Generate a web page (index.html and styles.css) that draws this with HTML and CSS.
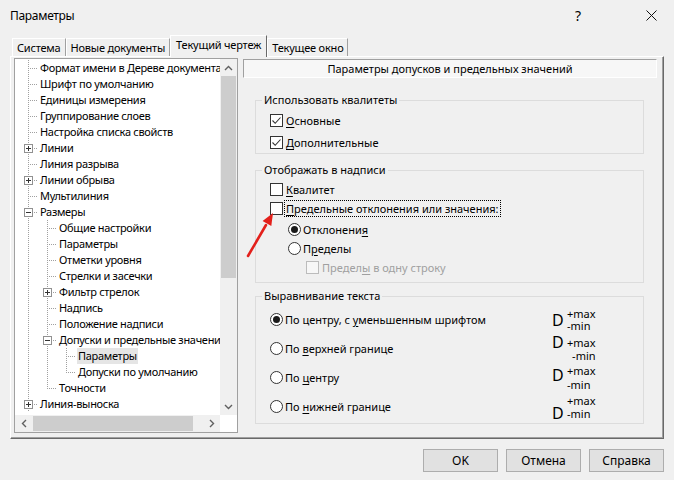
FILE: index.html
```html
<!DOCTYPE html>
<html lang="ru">
<head>
  <meta charset="UTF-8" />
  <title>Параметры</title>
  <link rel="stylesheet" href="styles.css">
</head>
<body>
  <div class="titlebar">
    <span class="title">Параметры</span>
    <span class="help">?</span>
    <span class="close">
      <svg width="11" height="11" viewBox="0 0 11 11"><path d="M0.5 0.5 L10.5 10.5 M10.5 0.5 L0.5 10.5" stroke="#111" stroke-width="1" fill="none"/></svg>
    </span>
  </div>

  <div class="content">
    <div class="tabs">
      <div class="tab">Система</div>
      <div class="tab">Новые документы</div>
      <div class="tab active">Текущий чертеж</div>
      <div class="tab last">Текущее окно</div>
    </div>

    <div class="frame">
      <div class="tree-box">
        <div class="tree-main">
          <div class="tree">
            <div class="row"><span class="g t"></span><span class="lbl">Формат имени в Дереве документа</span></div>
            <div class="row"><span class="g t"></span><span class="lbl">Шрифт по умолчанию</span></div>
            <div class="row"><span class="g t"></span><span class="lbl">Единицы измерения</span></div>
            <div class="row"><span class="g t"></span><span class="lbl">Группирование слоев</span></div>
            <div class="row"><span class="g t"></span><span class="lbl">Настройка списка свойств</span></div>
            <div class="row"><span class="g t"><i class="box plus"></i></span><span class="lbl">Линии</span></div>
            <div class="row"><span class="g t"></span><span class="lbl">Линия разрыва</span></div>
            <div class="row"><span class="g t"><i class="box plus"></i></span><span class="lbl">Линии обрыва</span></div>
            <div class="row"><span class="g t"></span><span class="lbl">Мультилиния</span></div>
            <div class="row"><span class="g t"><i class="box minus"></i></span><span class="lbl">Размеры</span></div>
            <div class="row"><span class="g v"></span><span class="g t"></span><span class="lbl">Общие настройки</span></div>
            <div class="row"><span class="g v"></span><span class="g t"></span><span class="lbl">Параметры</span></div>
            <div class="row"><span class="g v"></span><span class="g t"></span><span class="lbl">Отметки уровня</span></div>
            <div class="row"><span class="g v"></span><span class="g t"></span><span class="lbl">Стрелки и засечки</span></div>
            <div class="row"><span class="g v"></span><span class="g t"><i class="box plus"></i></span><span class="lbl">Фильтр стрелок</span></div>
            <div class="row"><span class="g v"></span><span class="g t"></span><span class="lbl">Надпись</span></div>
            <div class="row"><span class="g v"></span><span class="g t"></span><span class="lbl">Положение надписи</span></div>
            <div class="row"><span class="g v"></span><span class="g t"><i class="box minus"></i></span><span class="lbl">Допуски и предельные значения</span></div>
            <div class="row"><span class="g v"></span><span class="g v"></span><span class="g t"></span><span class="lbl selected">Параметры</span></div>
            <div class="row"><span class="g v"></span><span class="g v"></span><span class="g l"></span><span class="lbl">Допуски по умолчанию</span></div>
            <div class="row"><span class="g v"></span><span class="g l"></span><span class="lbl">Точности</span></div>
            <div class="row"><span class="g t"><i class="box plus"></i></span><span class="lbl">Линия-выноска</span></div>
          </div>
          <div class="vscroll">
            <div class="arrow">
              <svg width="9" height="6" viewBox="0 0 9 6"><path d="M1 5 L4.5 1.5 L8 5" stroke="#606060" stroke-width="1.4" fill="none"/></svg>
            </div>
            <div class="vthumb"></div>
            <div class="spacer"></div>
            <div class="arrow">
              <svg width="9" height="6" viewBox="0 0 9 6"><path d="M1 1 L4.5 4.5 L8 1" stroke="#606060" stroke-width="1.4" fill="none"/></svg>
            </div>
          </div>
        </div>
        <div class="hbar">
          <div class="hscroll">
            <div class="arrow">
              <svg width="6" height="9" viewBox="0 0 6 9"><path d="M5 1 L1.5 4.5 L5 8" stroke="#606060" stroke-width="1.4" fill="none"/></svg>
            </div>
            <div class="hthumb"></div>
            <div class="spacer"></div>
            <div class="arrow">
              <svg width="6" height="9" viewBox="0 0 6 9"><path d="M1 1 L4.5 4.5 L1 8" stroke="#606060" stroke-width="1.4" fill="none"/></svg>
            </div>
          </div>
          <div class="corner"></div>
        </div>
      </div>

      <div class="page">
        <div class="page-head">Параметры допусков и предельных значений</div>

        <div class="group g1">
          <span class="legend">Использовать квалитеты</span>
          <div class="opt first">
            <span class="cb checked"><svg width="11" height="11" viewBox="0 0 11 11"><path d="M1.5 5.5 L4.2 8.3 L9.5 2.5" stroke="#333" stroke-width="1.1" fill="none"/></svg></span>
            <span class="txt"><u>О</u>сновные</span>
          </div>
          <div class="opt">
            <span class="cb checked"><svg width="11" height="11" viewBox="0 0 11 11"><path d="M1.5 5.5 L4.2 8.3 L9.5 2.5" stroke="#333" stroke-width="1.1" fill="none"/></svg></span>
            <span class="txt"><u>Д</u>ополнительные</span>
          </div>
        </div>

        <div class="group g2">
          <span class="legend">Отображать в надписи</span>
          <div class="opt first">
            <span class="cb"></span>
            <span class="txt"><u>К</u>валитет</span>
          </div>
          <div class="opt">
            <span class="cb"></span>
            <span class="txt focus"><u>П</u>редельные отклонения или значения:</span>
          </div>
          <div class="opt sub gap">
            <span class="rb on"></span>
            <span class="txt rtxt">Отклонени<u>я</u></span>
          </div>
          <div class="opt sub">
            <span class="rb"></span>
            <span class="txt rtxt">П<u>р</u>еделы</span>
          </div>
          <div class="opt sub2">
            <span class="cb off"></span>
            <span class="txt dim">Предел<u>ы</u> в одну строку</span>
          </div>
        </div>

        <div class="group g3">
          <span class="legend">Выравнивание текста</span>
          <div class="align first">
            <div class="choice"><span class="rb on"></span><span class="txt rtxt">По центру, с <u>у</u>меньшенным шрифтом</span></div>
            <div class="fx fx1"><span class="d">D</span><span class="hi">+max</span><span class="lo">-min</span></div>
          </div>
          <div class="align">
            <div class="choice"><span class="rb"></span><span class="txt rtxt">По <u>в</u>ерхней границе</span></div>
            <div class="fx fx2"><span class="d">D</span><span class="hi">+max</span><span class="lo">-min</span></div>
          </div>
          <div class="align">
            <div class="choice"><span class="rb"></span><span class="txt rtxt">По <u>ц</u>ентру</span></div>
            <div class="fx fx3"><span class="d">D</span><span class="hi">+max</span><span class="lo">-min</span></div>
          </div>
          <div class="align">
            <div class="choice"><span class="rb"></span><span class="txt rtxt">По <u>н</u>ижней границе</span></div>
            <div class="fx fx4"><span class="d">D</span><span class="hi">+max</span><span class="lo">-min</span></div>
          </div>
        </div>
      </div>
    </div>

    <div class="buttons">
      <button class="btn">OK</button>
      <button class="btn">Отмена</button>
      <button class="btn">Справка</button>
    </div>
  </div>

  <!-- красная стрелка-пометка поверх окна -->
  <svg class="mark" width="40" height="56" viewBox="240 208 40 56">
    <path d="M248 256 L266 225" stroke="#e3201b" stroke-width="2.6" stroke-linecap="round" fill="none"/>
    <path d="M273 213 L271.3 226 L262.6 221 Z" fill="#e3201b"/>
  </svg>
</body>
</html>
```

FILE: styles.css
```css
:root {
  --vl: repeating-linear-gradient(to bottom, #a0a0a0 0 1px, transparent 1px 2px);
  --hl: repeating-linear-gradient(to right, #a0a0a0 0 1px, transparent 1px 2px);
}

* {
  box-sizing: border-box;
}

body {
  margin: 0;
  width: 674px;
  height: 480px;
  background: #f0f0f0;
  font-family: "Noto Sans", sans-serif;
  font-size: 11px;
  color: #000;
  overflow: hidden;
  position: relative;
}

u {
  text-decoration: underline;
  text-underline-offset: 2px;
}

/* Заголовок */
.titlebar {
  height: 30px;
  display: flex;
  align-items: center;
  padding-left: 10px;
}

.title {
  flex: 1;
  font-size: 12px;
  letter-spacing: -0.3px;
}

.help {
  width: 46px;
  text-align: center;
  font-size: 14px;
  margin-right: 27px;
}

.close {
  width: 46px;
  height: 30px;
  display: flex;
  align-items: center;
  justify-content: center;
}

.content {
  padding: 0 10px;
}

/* Вкладки */
.tabs {
  height: 26px;
  display: flex;
  align-items: flex-end;
  padding-left: 2px;
}

.tab {
  height: 18px;
  line-height: 17px;
  padding: 0 4px;
  letter-spacing: -0.2px;
  border-left: 1px solid #fff;
  border-top: 1px solid #fff;
  border-right: 1px solid #a0a0a0;
  white-space: nowrap;
}

.tab.active {
  height: 22px;
  line-height: 18px;
  margin-bottom: -1px;
  padding: 0 5px;
  background: #f0f0f0;
  border-right-color: #696969;
  position: relative;
  z-index: 1;
}

/* Рамка страницы */
.frame {
  height: 383px;
  display: flex;
  gap: 5px;
  padding: 1px 6px 5px 3px;
  border: 1px solid;
  border-color: #fff #696969 #696969 #fff;
  box-shadow: inset -1px -1px 0 #a0a0a0;
}

/* Дерево */
.tree-box {
  width: 224px;
  height: 375px;
  flex: none;
  border: 1px solid #a0a0a0;
  background: #fff;
  display: flex;
  flex-direction: column;
}

.tree-main {
  height: 356px;
  display: flex;
}

.tree {
  flex: 1;
  overflow: hidden;
  padding: 1px 0 0 4px;
}

.row {
  display: flex;
  height: 16px;
  align-items: center;
  white-space: nowrap;
}

.g {
  width: 19px;
  height: 16px;
  flex: none;
  display: flex;
  align-items: center;
  padding-left: 5px;
  background-repeat: no-repeat;
}

.g.v {
  background-image: var(--vl);
  background-size: 1px 16px;
  background-position: 9px 0;
}

.g.t,
.g.l {
  background-image: var(--vl), var(--hl);
  background-size: 1px 16px, 10px 1px;
  background-position: 9px 0, 9px 8px;
}

.g.l {
  background-size: 1px 9px, 10px 1px;
}

.box {
  width: 9px;
  height: 9px;
  border: 1px solid #919191;
  background-color: #fff;
  background-repeat: no-repeat;
  background-position: center;
}

.box.plus {
  background-image: linear-gradient(#333, #333), linear-gradient(#333, #333);
  background-size: 5px 1px, 1px 5px;
}

.box.minus {
  background-image: linear-gradient(#333, #333);
  background-size: 5px 1px;
}

.lbl {
  margin-left: 1px;
  padding: 0 1px;
  line-height: 16px;
  letter-spacing: -0.3px;
}

.lbl.selected {
  background: #e5e5e5;
}

.vscroll {
  width: 17px;
  flex: none;
  background: #f0f0f0;
  display: flex;
  flex-direction: column;
}

.arrow {
  width: 17px;
  height: 17px;
  flex: none;
  display: flex;
  align-items: center;
  justify-content: center;
}

.vthumb {
  height: 202px;
  margin: 0 1px;
  background: #cdcdcd;
}

.spacer {
  flex: 1;
}

.hbar {
  height: 17px;
  display: flex;
}

.hscroll {
  flex: 1;
  display: flex;
  background: #f0f0f0;
}

.hthumb {
  width: 160px;
  margin: 1px 0 1px 1px;
  background: #cdcdcd;
}

.corner {
  width: 17px;
  background: #fff;
}

/* Правая страница */
.page {
  flex: 1;
  padding-top: 1px;
  display: flex;
  flex-direction: column;
}

.page-head {
  height: 19px;
  line-height: 17px;
  text-align: center;
  background: #f7f7f7;
  border: 1px solid;
  border-color: #a0a0a0 #fff #fff #a0a0a0;
}

.group {
  margin: 0 13px 0 12px;
  border: 1px solid #dcdcdc;
  display: flex;
  flex-direction: column;
}

.g1 {
  margin-top: 22px;
  height: 54px;
}

.g2 {
  margin-top: 16px;
  height: 113px;
}

.g3 {
  margin-top: 13px;
  height: 128px;
}

.legend {
  align-self: flex-start;
  margin: -9px 0 0 6px;
  padding: 0 2px;
  line-height: 16px;
  background: #f0f0f0;
}

.opt {
  display: flex;
  align-items: center;
  height: 19px;
  padding-left: 14px;
}

.g1 .opt {
  height: 20px;
  margin-top: 2px;
}

.g2 .opt.first {
  margin-top: 2px;
}

.opt.gap {
  margin-top: 2px;
}

.opt.sub {
  padding-left: 32px;
}

.opt.sub2 {
  padding-left: 50px;
}

.cb {
  width: 13px;
  height: 13px;
  flex: none;
  border: 1px solid #333;
  background: #fff;
  display: flex;
  align-items: center;
  justify-content: center;
}

.cb.off {
  border-color: #bcbcbc;
  background: #f7f7f7;
}

.rb {
  width: 13px;
  height: 13px;
  flex: none;
  border: 1px solid #333;
  border-radius: 50%;
  background: #fff;
  display: flex;
  align-items: center;
  justify-content: center;
}

.rb.on::after {
  content: "";
  width: 7px;
  height: 7px;
  border-radius: 50%;
  background: #1a1a1a;
}

.txt {
  margin-left: 3px;
  line-height: 15px;
  white-space: nowrap;
}

.rtxt {
  margin-left: 2px;
}

.focus {
  margin-left: 2px;
  padding: 0 1px;
  outline: 1px dotted #000;
  outline-offset: 0;
}

.dim {
  color: #a0a0a0;
}

/* Выравнивание текста */
.align {
  height: 29px;
  display: grid;
  grid-template-columns: 282px 1fr;
  align-items: center;
  padding-left: 14px;
}

.align.first {
  margin-top: 1px;
}

.choice {
  display: flex;
  align-items: center;
}

.fx {
  display: grid;
  grid-template-columns: 15px auto;
  align-items: center;
  justify-content: start;
  font-size: 11px;
}

.fx .d {
  font-size: 16px;
  line-height: 16px;
}

.fx .hi,
.fx .lo {
  grid-column: 2;
  line-height: inherit;
}

.fx1 {
  grid-template-rows: 12px 12px;
  line-height: 12px;
}

.fx1 .d {
  grid-row: 1 / 3;
}

.fx2 {
  grid-template-rows: 13px 13px;
  line-height: 13px;
}

.fx2 .d {
  grid-row: 1;
}

.fx2 .lo {
  justify-self: end;
}

.fx3 {
  grid-template-rows: 14px 14px;
  line-height: 14px;
}

.fx3 .d {
  grid-row: 1 / 3;
  margin-bottom: 6px;
}

.fx4 {
  grid-template-rows: 13px 13px;
  line-height: 13px;
}

.fx4 .hi {
  grid-row: 1;
}

.fx4 .d {
  grid-row: 2;
  grid-column: 1;
}

.fx4 .lo {
  grid-row: 2;
}

/* Кнопки */
.buttons {
  display: flex;
  justify-content: flex-end;
  gap: 8px;
  margin-top: 10px;
}

.btn {
  width: 75px;
  height: 23px;
  font-family: "Noto Sans", sans-serif;
  font-size: 12px;
  color: #000;
  background: #e1e1e1;
  border: 1px solid #adadad;
  padding: 0;
}

.mark {
  position: absolute;
  left: 240px;
  top: 208px;
}
```
